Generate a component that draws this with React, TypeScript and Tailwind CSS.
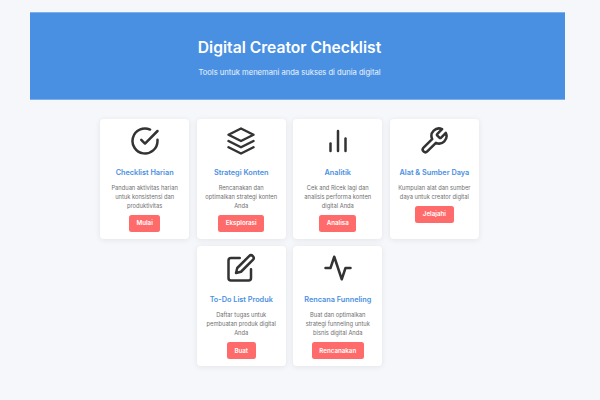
import React from "react";

const I = ({ children }: { children: React.ReactNode }) => (
  <svg viewBox="0 0 24 24" fill="none" stroke="#333333" strokeWidth="2" strokeLinecap="round" strokeLinejoin="round" className="h-[30px] w-[30px]">
    {children}
  </svg>
);

const cards = [
  { t: "Checklist Harian", d: ["Panduan aktivitas harian", "untuk konsistensi dan", "produktivitas"], b: "Mulai", i: <><path d="M22 11.08V12a10 10 0 1 1-5.93-9.14" /><polyline points="22 4 12 14.01 9 11.01" /></> },
  { t: "Strategi Konten", d: ["Rencanakan dan", "optimalkan strategi konten", "Anda"], b: "Eksplorasi", i: <><polygon points="12 2 2 7 12 12 22 7 12 2" /><polyline points="2 17 12 22 22 17" /><polyline points="2 12 12 17 22 12" /></> },
  { t: "Analitik", d: ["Cek and Ricek lagi dan", "analisis performa konten", "digital Anda"], b: "Analisa", i: <><line x1="18" y1="20" x2="18" y2="10" /><line x1="12" y1="20" x2="12" y2="4" /><line x1="6" y1="20" x2="6" y2="14" /></> },
  { t: "Alat & Sumber Daya", d: ["Kumpulan alat dan sumber", "daya untuk creator digital"], b: "Jelajahi", i: <path d="M14.7 6.3a1 1 0 0 0 0 1.4l1.6 1.6a1 1 0 0 0 1.4 0l3.77-3.77a6 6 0 0 1-7.94 7.94l-6.91 6.91a2.12 2.12 0 0 1-3-3l6.91-6.91a6 6 0 0 1 7.94-7.94l-3.76 3.76z" /> },
  { t: "To-Do List Produk", d: ["Daftar tugas untuk", "pembuatan produk digital", "Anda"], b: "Buat", i: <><path d="M11 4H4a2 2 0 0 0-2 2v14a2 2 0 0 0 2 2h14a2 2 0 0 0 2-2v-7" /><path d="M18.5 2.5a2.121 2.121 0 0 1 3 3L12 15l-4 1 1-4 9.5-9.5z" /></> },
  { t: "Rencana Funneling", d: ["Buat dan optimalkan", "strategi funneling untuk", "bisnis digital Anda"], b: "Rencanakan", i: <polyline points="22 12 18 12 15 21 9 3 6 12 2 12" /> },
];

export default function App() {
  return (
    <div className="min-h-[400px] bg-[#f5f7fb] pt-3 font-['Inter',sans-serif]">
      <div className="ml-[30px] w-[535px] h-[88px] box-border border-y border-[#7db0ec] bg-[#4a90e2] flex flex-col items-center pt-[24px]">
        <h1 className="text-[15.65px] leading-[22px] font-semibold text-white mr-[16px]">Digital Creator Checklist</h1>
        <p className="mt-[8px] text-[7.6px] leading-[12px] text-white/90 mr-[16px]">Tools untuk menemani anda sukses di dunia digital</p>
      </div>
      <div className="ml-[100px] w-[379px] mt-[19px] flex flex-wrap justify-center gap-[7.4px]">
        {cards.map((c) => (
          <div key={c.t} className="w-[89.2px] h-[120px] bg-white rounded-[4px] shadow-[0_1px_6px_rgba(0,0,0,0.08)] flex flex-col items-center pt-[7px]">
            <I>{c.i}</I>
            <h2 className="mt-[11px] text-[7.3px] leading-[12px] font-semibold text-[#4a90e2] whitespace-nowrap">{c.t}</h2>
            <p className="mt-[3.5px] text-[5.76px] leading-[9px] text-[#6f6f6f] text-center whitespace-nowrap">
              {c.d.map((l) => (<span key={l} className="block">{l}</span>))}
            </p>
            <div className="mt-[5px] px-[7.7px] h-[17px] rounded-[2.5px] bg-[#ff6b6b] text-white text-[6.2px] font-semibold flex items-center">{c.b}</div>
          </div>
        ))}
      </div>
    </div>
  );
}
